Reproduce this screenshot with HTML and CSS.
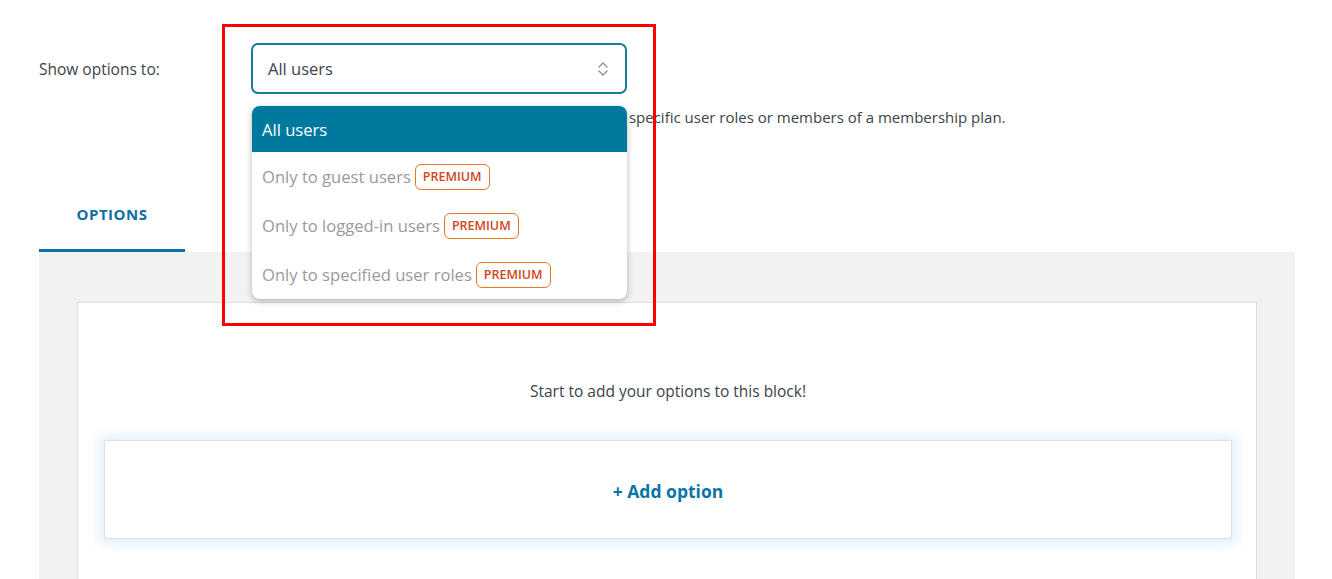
FILE: index.html
```html
<!DOCTYPE html>
<html lang="en">
<head>
<meta charset="utf-8">
<title>Show options to</title>
<link rel="stylesheet" href="styles.css">
</head>
<body>
<div class="page">
  <div class="setting">
    <div class="setting-label">Show options to:</div>
    <div class="setting-field">
      <div class="select-wrap">
        <div class="select">
          <span class="select-value">All users</span>
          <svg class="select-chevron" width="12" height="18" viewBox="0 0 12 18" aria-hidden="true">
            <path d="M2 7 L6 3 L10 7" fill="none" stroke="#8a8fa8" stroke-width="1.4" stroke-linecap="round" stroke-linejoin="round"/>
            <path d="M2 11 L6 15 L10 11" fill="none" stroke="#8a8fa8" stroke-width="1.4" stroke-linecap="round" stroke-linejoin="round"/>
          </svg>
        </div>
        <ul class="dropdown">
          <li class="dropdown-item is-active">All users</li>
          <li class="dropdown-item is-disabled">Only to guest users <span class="badge">Premium</span></li>
          <li class="dropdown-item is-disabled">Only to logged-in users <span class="badge">Premium</span></li>
          <li class="dropdown-item is-disabled">Only to specified user roles <span class="badge">Premium</span></li>
        </ul>
      </div>
      <p class="setting-desc">Select whether to show options to all users, or only to specific user roles or members of a membership plan.</p>
    </div>
  </div>

  <div class="tabs">
    <div class="tab is-current">OPTIONS</div>
  </div>

  <div class="panel">
    <div class="card">
      <p class="card-empty">Start to add your options to this block!</p>
      <div class="add-box">
        <span class="add-link">+ Add option</span>
      </div>
    </div>
  </div>
</div>
<div class="annotation"></div>
</body>
</html>
```

FILE: styles.css
```css
* { box-sizing: border-box; }

html, body {
  margin: 0;
  padding: 0;
  background: #ffffff;
}

body {
  font-family: "Open Sans", "Noto Sans", "Liberation Sans", sans-serif;
  color: #3c434a;
  position: relative;
  overflow: hidden;
  height: 579px;
}

.page {
  padding: 43px 37px 0 39px;
}

.setting {
  display: flex;
  align-items: flex-start;
}

.setting-label {
  width: 212px;
  flex: none;
  font-size: 15.5px;
  line-height: 20px;
  padding-top: 16px;
  color: #3c434a;
}

.setting-field {
  flex: 1;
}

.select-wrap {
  position: relative;
  width: 376px;
}

.select {
  height: 51px;
  border: 2px solid #1a7b99;
  border-radius: 7px;
  display: flex;
  align-items: center;
  justify-content: space-between;
  padding: 0 16px 0 15px;
  background: #fff;
}

.select-value {
  font-size: 16.5px;
  color: #3c434a;
}

.select-chevron {
  display: block;
}

.dropdown {
  position: absolute;
  top: 63px;
  left: 1px;
  width: 375px;
  margin: 0;
  padding: 0;
  list-style: none;
  background: #fff;
  border-radius: 8px;
  box-shadow: 0 2px 6px rgba(0, 0, 0, 0.28);
  overflow: hidden;
  z-index: 5;
}

.dropdown-item {
  display: flex;
  align-items: center;
  height: 49px;
  padding: 0 10px;
  font-size: 16.6px;
  color: #9a9a9a;
}

.dropdown-item.is-active {
  height: 46px;
  background: #00799f;
  color: #ffffff;
}

.badge {
  display: inline-flex;
  align-items: center;
  height: 26px;
  margin-left: 4px;
  padding: 0 7px;
  border: 1px solid #e8751f;
  border-radius: 6px;
  font-size: 12.5px;
  font-weight: 600;
  text-transform: uppercase;
  color: #cf461b;
}

.setting-desc {
  margin: 13px 0 0;
  font-size: 15px;
  line-height: 20px;
  color: #3c434a;
  white-space: nowrap;
}

.tabs {
  display: flex;
  margin-top: 51px;
}

.tab {
  width: 146px;
  text-align: center;
  padding: 26px 0 25px;
  font-size: 15px;
  letter-spacing: 0.5px;
  line-height: 20px;
  font-weight: 700;
  color: #0f6ea3;
  border-bottom: 3px solid #0e6ea6;
}

.panel {
  background: #f2f2f2;
  padding: 50px 38px 0;
  height: 340px;
}

.card {
  background: #fff;
  border: 1px solid #dedede;
  border-bottom: none;
  padding: 78px 24px 60px 26px;
  height: 290px;
}

.card-empty {
  margin: 0;
  text-align: center;
  font-size: 15.5px;
  line-height: 20px;
  color: #3c434a;
}

.add-box {
  margin-top: 39px;
  height: 99px;
  border: 1px solid #dcdfe4;
  background: #fff;
  box-shadow: 0 0 12px 4px rgba(160, 210, 240, 0.35);
  display: flex;
  align-items: center;
  justify-content: center;
}

.add-link {
  font-size: 17.5px;
  font-weight: 700;
  color: #0b74a6;
  position: relative;
  top: 1px;
}

.annotation {
  position: absolute;
  left: 222px;
  top: 24px;
  width: 434px;
  height: 302px;
  border: 3px solid #ff0000;
  z-index: 10;
  pointer-events: none;
}
```
